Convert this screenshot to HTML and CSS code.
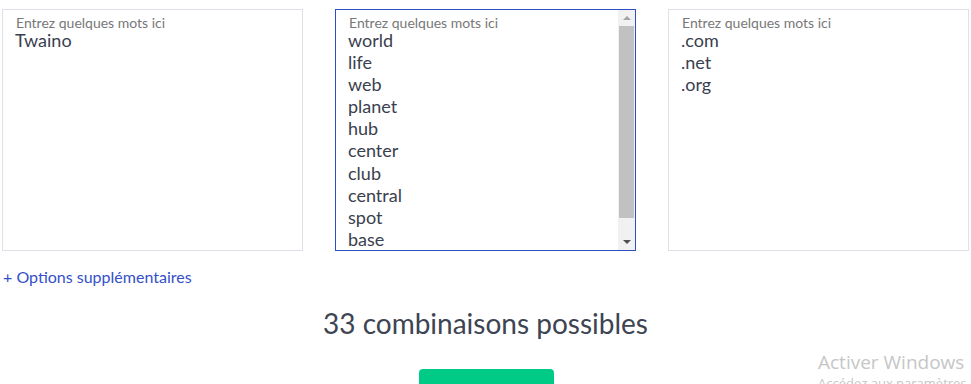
FILE: index.html
```html
<!DOCTYPE html>
<html lang="fr">
<head>
<meta charset="utf-8">
<title>Générateur</title>
<link rel="stylesheet" href="styles.css">
</head>
<body>
<div class="page">
  <div class="boxes">
    <div class="box">
      <div class="label">Entrez quelques mots ici</div>
      <div class="words">
        <div>Twaino</div>
      </div>
    </div>
    <div class="box box-focus">
      <div class="box-content">
        <div class="label">Entrez quelques mots ici</div>
        <div class="words">
          <div>world</div>
          <div>life</div>
          <div>web</div>
          <div>planet</div>
          <div>hub</div>
          <div>center</div>
          <div>club</div>
          <div>central</div>
          <div>spot</div>
          <div>base</div>
          <div>zone</div>
          <div>point</div>
        </div>
      </div>
      <div class="scrollbar">
        <div class="sb-btn"><span class="arrow-up"></span></div>
        <div class="sb-thumb"></div>
        <div class="sb-track"></div>
        <div class="sb-btn"><span class="arrow-down"></span></div>
      </div>
    </div>
    <div class="box">
      <div class="label">Entrez quelques mots ici</div>
      <div class="words">
        <div>.com</div>
        <div>.net</div>
        <div>.org</div>
      </div>
    </div>
  </div>
  <a class="options" href="#">+ Options supplémentaires</a>
  <h2 class="count">33 combinaisons possibles</h2>
  <div class="actions">
    <button class="go">Essayez-le</button>
  </div>
</div>
<div class="watermark">
  <div class="wm-title">Activer Windows</div>
  <div class="wm-sub">Accédez aux paramètres pour activer Windows.</div>
</div>
</body>
</html>
```
FILE: styles.css
```css
html, body {
  margin: 0;
  padding: 0;
  background: #ffffff;
  overflow: hidden;
}
body {
  font-family: Lato, "Open Sans", sans-serif;
  color: #3c4250;
  width: 971px;
  height: 384px;
  position: relative;
}
.page {
  padding: 9px 2px 0 2px;
}
.boxes {
  display: grid;
  grid-template-columns: 301px 301px 301px;
  column-gap: 32px;
}
.box {
  box-sizing: border-box;
  height: 242px;
  border: 1px solid #dfe1e9;
  padding: 4px 0 0 12px;
  overflow: hidden;
}
.box-focus {
  border-color: #2f4ec4;
  display: flex;
  padding: 0 0 0 12px;
}
.box-content {
  flex: 1;
  padding-top: 4px;
  overflow: hidden;
}
.label {
  font-size: 14px;
  line-height: 18px;
  color: #787878;
  padding-left: 1px;
}
.words {
  font-size: 18px;
  line-height: 22.1px;
  color: #3a404e;
  margin-top: -3px;
}
.scrollbar {
  width: 17px;
  flex: 0 0 17px;
  display: flex;
  flex-direction: column;
  background: #f1f1f1;
}
.sb-btn {
  height: 16px;
  display: flex;
  align-items: center;
  justify-content: center;
}
.arrow-up {
  width: 0;
  height: 0;
  border-left: 4px solid transparent;
  border-right: 4px solid transparent;
  border-bottom: 4px solid #a3a3a3;
}
.arrow-down {
  width: 0;
  height: 0;
  border-left: 4px solid transparent;
  border-right: 4px solid transparent;
  border-top: 4px solid #505050;
}
.sb-thumb {
  height: 192px;
  margin: 0 1px;
  background: #c1c1c1;
}
.sb-track {
  flex: 1;
}
.options {
  display: inline-block;
  margin-top: 16px;
  margin-left: 1px;
  font-size: 16px;
  line-height: 20px;
  color: #3350c8;
  text-decoration: none;
}
.count {
  margin: 19px 0 0 0;
  text-align: center;
  font-size: 28px;
  line-height: 34px;
  font-weight: 400;
  color: #3d4452;
}
.actions {
  display: flex;
  justify-content: center;
  margin-top: 29px;
}
.go {
  width: 135px;
  height: 44px;
  border: none;
  border-radius: 4px;
  background: #00cb86;
  color: #ffffff;
  font-family: inherit;
  font-size: 18px;
  padding: 10px 0 0 0;
  margin-left: 1px;
}
.watermark {
  position: absolute;
  left: 818px;
  top: 349px;
  font-family: "Open Sans", "DejaVu Sans", sans-serif;
  color: #c6c6c6;
  white-space: nowrap;
}
.wm-title {
  font-size: 19px;
  line-height: 26px;
}
.wm-sub {
  font-size: 13px;
  line-height: 16px;
}
```
